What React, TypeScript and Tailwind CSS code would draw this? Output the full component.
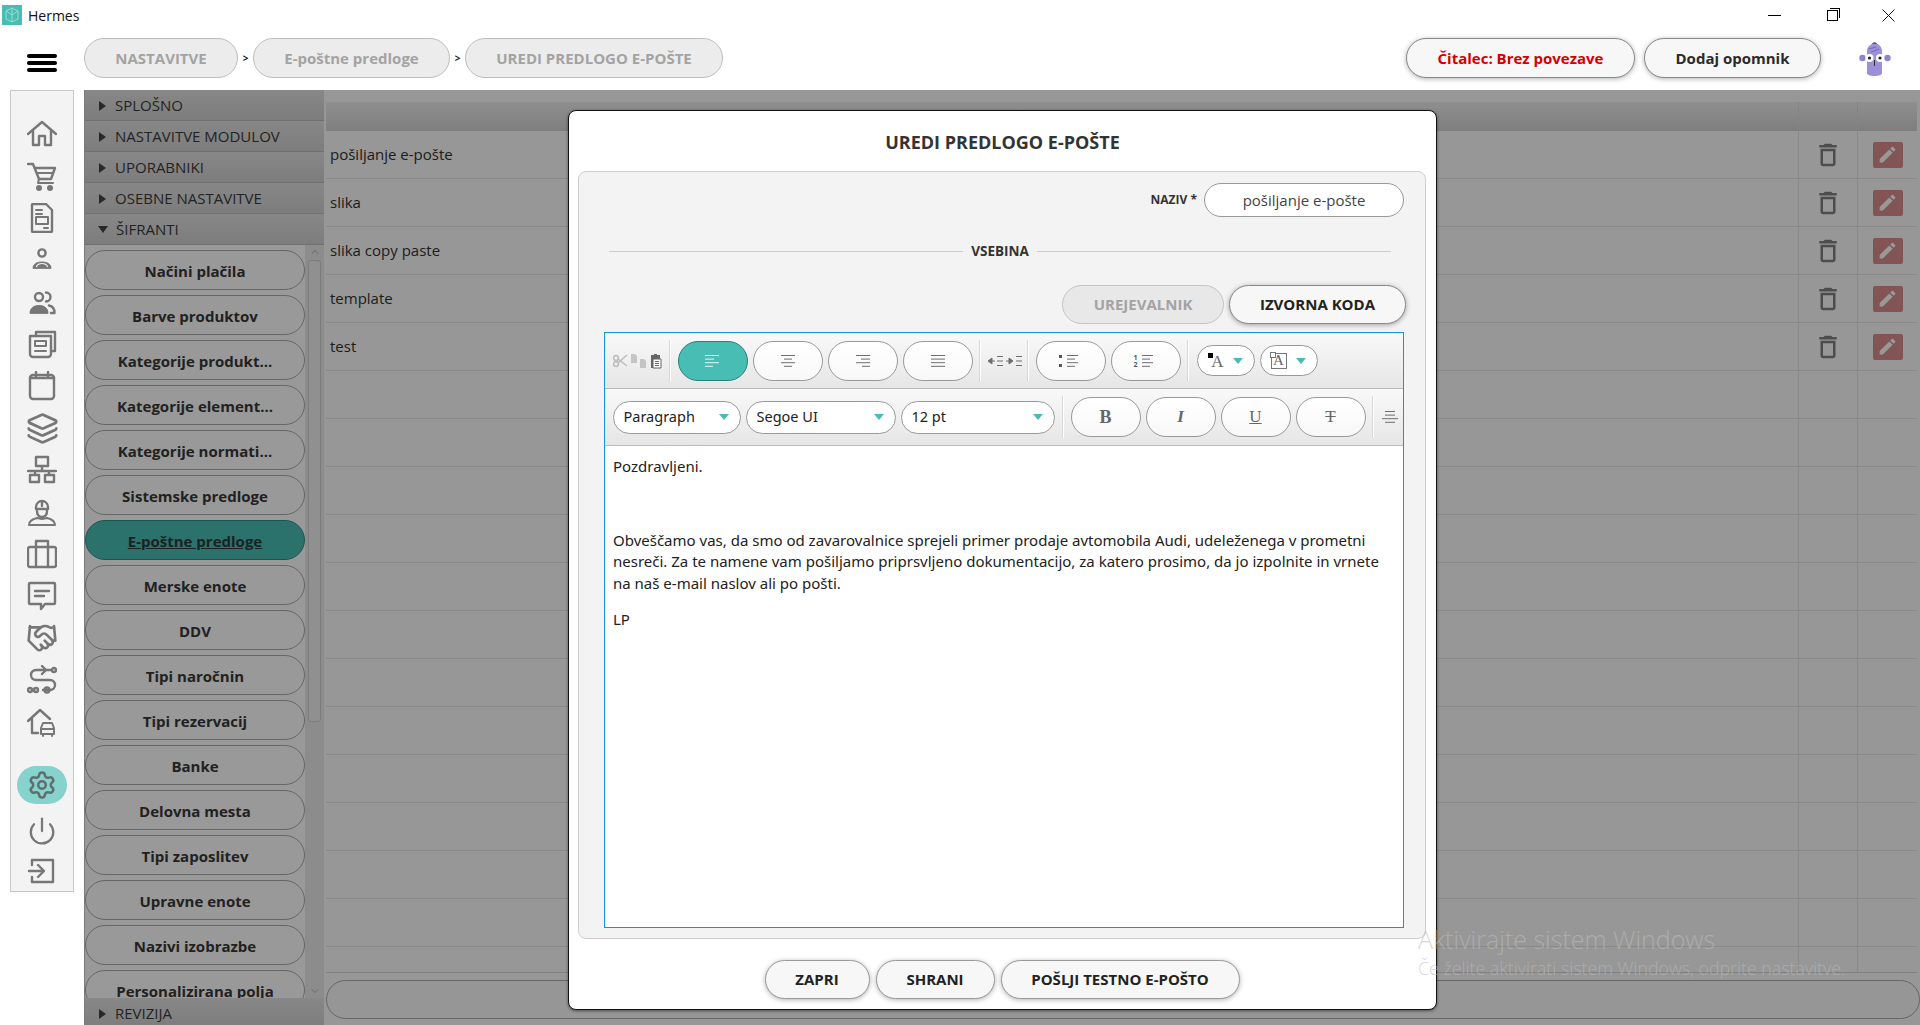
import {
  ChevronDown,
  ChevronUp,
  Handshake,
  Layers,
  Power,
  Settings,
} from 'lucide-react'
import { MdEdit, MdOutlineDelete } from 'react-icons/md'
import type { ReactNode } from 'react'

const font = { fontFamily: '"Open Sans", "Noto Sans", sans-serif' }

const accordionTop = ['SPLOŠNO', 'NASTAVITVE MODULOV', 'UPORABNIKI', 'OSEBNE NASTAVITVE']

const codebooks = [
  'Načini plačila',
  'Barve produktov',
  'Kategorije produkt...',
  'Kategorije element...',
  'Kategorije normati...',
  'Sistemske predloge',
  'E-poštne predloge',
  'Merske enote',
  'DDV',
  'Tipi naročnin',
  'Tipi rezervacij',
  'Banke',
  'Delovna mesta',
  'Tipi zaposlitev',
  'Upravne enote',
  'Nazivi izobrazbe',
  'Personalizirana polja',
]

const templates = ['pošiljanje e-pošte', 'slika', 'slika copy paste', 'template', 'test']

function Glyph({ children }: { children: ReactNode }) {
  return (
    <svg
      viewBox="0 0 30 30"
      className="w-[30px] h-[30px]"
      fill="none"
      stroke="currentColor"
      strokeWidth={2.4}
      strokeLinecap="round"
      strokeLinejoin="round"
    >
      {children}
    </svg>
  )
}

const nav: ReactNode[] = [
  <Glyph key="home">
    <path d="M1 15 15 3l14 12" />
    <path d="M6 12v14h6v-9h6v9h6V12" />
  </Glyph>,
  <Glyph key="cart">
    <path d="M1 3h5l6 15" />
    <path d="M8 7h20l-4 11H12" />
    <path d="M10 12h16M12 18l-1 4h15" strokeWidth={2} />
    <circle cx="12" cy="27" r="1.800" fill="currentColor" />
    <circle cx="23" cy="27" r="1.800" fill="currentColor" />
  </Glyph>,
  <Glyph key="doc">
    <path d="M6 1h13l6 6v21a1 1 0 0 1-1 1H6a1 1 0 0 1-1-1V2a1 1 0 0 1 1-1z" />
    <path d="M9 7h6M9 11h6M9 14h12v7H9zM17 25h4" strokeWidth={2} />
  </Glyph>,
  <Glyph key="user">
    <circle cx="15" cy="8" r="3.600" />
    <path d="M6 23c0-4 4-6 9-6s9 2 9 6z" fill="currentColor" strokeWidth={1} />
    <path d="M9.500 21.500c1-2 3-3 5.500-3s4.500 1 5.500 3" stroke="#f3f3f3" strokeWidth={1.2} />
  </Glyph>,
  <Glyph key="users">
    <circle cx="12" cy="10" r="4" />
    <path d="M19 5.500a4.500 4.500 0 0 1 0 9" />
    <path d="M3 26c0-5 4-7.500 9-7.500s9 2.500 9 7.500z" fill="currentColor" strokeWidth={1} />
    <path d="M22 18.500c3 .5 5.500 3 5.500 7.500H24" />
  </Glyph>,
  <Glyph key="stack">
    <path d="M9 7V3h19v19h-4" />
    <path d="M3 7h21v18a3 3 0 0 1-3 3H6a3 3 0 0 1-3-3z" />
    <path d="M8 12h11v5H8zM8 22h11" strokeWidth={2} />
  </Glyph>,
  <Glyph key="cal">
    <rect x="3" y="4" width="24" height="24" rx="3" />
    <path d="M9 1v4M21 1v4M3 7h24" />
  </Glyph>,
  <Layers key="layers" size={33} strokeWidth={2} />,
  <Glyph key="net">
    <rect x="9" y="2" width="12" height="9" fill="none" />
    <path d="M15 11v5M1 16h28M8 16v3M22 16v3" />
    <rect x="3" y="20" width="9" height="7" />
    <rect x="18" y="20" width="9" height="7" />
  </Glyph>,
  <Glyph key="worker">
    <path d="M9 12v-2a6 6 0 0 1 12 0v2zM15 4v5" />
    <path d="M10 14c0 4 2 6 5 6s5-2 5-6" />
    <path d="M2 28c0-4 4-6 8-7l5 1 5-1c4 1 8 3 8 7z" strokeWidth={2} />
  </Glyph>,
  <Glyph key="case">
    <rect x="1" y="8" width="28" height="20" rx="2" />
    <path d="M9 8V2h12v6M9 8v20M21 8v20" />
  </Glyph>,
  <Glyph key="chat">
    <path d="M3 2h24a1 1 0 0 1 1 1v19a1 1 0 0 1-1 1h-9l-4 5v-5H3a1 1 0 0 1-1-1V3a1 1 0 0 1 1-1z" />
    <path d="M8 10h14M8 15h9" />
  </Glyph>,
  <Handshake key="hands" size={32} strokeWidth={2} />,
  <Glyph key="route">
    <path d="M24 5H9a5 5 0 0 0 0 10h14a5 5 0 0 1 0 10h-7" />
    <path d="M15 1l4 4-4 4" />
    <circle cx="27" cy="5" r="2" />
    <circle cx="3" cy="25" r="2" />
    <circle cx="9" cy="25" r="2" />
    <circle cx="20" cy="25" r="2.500" />
  </Glyph>,
  <Glyph key="garage">
    <path d="M1 14 13 3l10 9M5 11v15h6" />
    <path d="M14 27v-6l2-5h9l2 5v6zM14 22h13M16 29v-2M25 29v-2" strokeWidth={2} />
  </Glyph>,
]

function Sidebar() {
  return (
    <aside className="ml-[10px] mb-[133px] w-[64px] shrink-0 bg-[#f3f3f3] border border-[#c8c8c8] flex flex-col items-center pt-[22px] text-[#777777]">
      <div className="flex flex-col items-center">
        {nav.map((icon, i) => (
          <div key={i} className="h-[42px] w-full flex items-center justify-center">
            {icon}
          </div>
        ))}
      </div>
      <div className="mt-[23px] w-[50px] h-[40px] rounded-[20px] bg-[#86d2cc] flex items-center justify-center text-[#5f6f6e]">
        <Settings size={30} strokeWidth={2} />
      </div>
      <div className="h-[42px] mt-[6px] flex items-center justify-center">
        <Power size={30} strokeWidth={1.800} />
      </div>
      <div className="h-[42px] flex items-center justify-center">
        <Glyph>
          <path d="M5 9V4h21v22H5v-5" />
          <path d="M2 15h14M11 9l6 6-6 6" />
        </Glyph>
      </div>
    </aside>
  )
}

function Crumb({ label, w }: { label: string; w: string }) {
  return (
    <div
      className={`${w} h-[40px] rounded-[20px] bg-[#ececec] border border-[#bdbdbd] flex items-center justify-center text-[15px] font-bold text-[#a3a3a3]`}
    >
      {label}
    </div>
  )
}

function Sep() {
  return <span className="w-[15px] text-center text-[10px] font-bold text-[#222222]">&gt;</span>
}

function AccordionHeader({ label, open }: { label: string; open?: boolean }) {
  return (
    <div className="h-[31px] shrink-0 flex items-center pl-[13px] pt-[1px] gap-[8px] bg-gradient-to-b from-[#e2e2e2] to-[#d0d0d0] border-b border-[#bbbbbb] text-[15px] text-[#3a3a3a]">
      <span
        className={
          open
            ? 'w-0 h-0 border-x-[5px] border-x-transparent border-t-[7px] border-t-[#444444]'
            : 'ml-[1px] w-0 h-0 border-y-[5px] border-y-transparent border-l-[7px] border-l-[#444444] mr-[1px]'
        }
      />
      {label}
    </div>
  )
}

function SideMenu() {
  return (
    <div className="w-[240px] shrink-0 h-full flex flex-col border-l border-[#cccccc] bg-white overflow-hidden">
      {accordionTop.map(label => (
        <AccordionHeader key={label} label={label} />
      ))}
      <AccordionHeader label="ŠIFRANTI" open />
      <div className="h-[753px] shrink-0 flex overflow-hidden">
        <div className="flex-1 min-w-0 flex flex-col gap-[5px] pt-[5px] overflow-hidden">
          {codebooks.map(label => {
            const active = label === 'E-poštne predloge'
            return (
              <div
                key={label}
                className={
                  active
                    ? 'h-[40px] shrink-0 pt-[2px] rounded-[20px] border border-[#2f8f87] bg-[#48bdb4] flex items-center justify-center text-[15px] font-bold text-[#2f3a3a] underline'
                    : 'h-[40px] shrink-0 pt-[2px] rounded-[20px] border border-[#aaaaaa] bg-white flex items-center justify-center text-[15px] font-bold text-[#383838]'
                }
              >
                {label}
              </div>
            )
          })}
        </div>
        <div className="w-[19px] shrink-0 bg-[#e9e9e9] flex flex-col items-center pt-[1px] text-[#b0b0b0]">
          <ChevronUp size={12} />
          <div className="mt-[2px] w-[13px] h-[462px] rounded-[3px] bg-[#f0f0f0] border border-[#cfcfcf]" />
          <ChevronDown size={12} className="mt-auto mb-[1px]" />
        </div>
      </div>
      <AccordionHeader label="REVIZIJA" />
    </div>
  )
}

function TemplateTable() {
  const rows = Array.from({ length: 18 }, (_, i) => templates[i] ?? '')
  return (
    <div className="flex-1 min-w-0 h-full flex flex-col bg-[#fcfcfc] pt-[12px] pl-[2px]">
      <div className="h-[871px] overflow-hidden border-b border-[#d8d8d8] mr-[3px]">
        <div className="h-[29px] flex bg-gradient-to-b from-[#eeeeee] to-[#d4d4d4] border-b border-[#d0d0d0]">
          <div className="flex-1" />
          <div className="w-[59px] border-l border-[#dcdcdc]" />
          <div className="w-[60px] border-l border-[#dcdcdc]" />
        </div>
        {rows.map((name, i) => (
          <div key={i} className="h-[48px] flex items-center border-b border-[#e4e4e4]">
            <div className="flex-1 pl-[4px] text-[15px] text-[#333333]">{name}</div>
            <div className="w-[59px] h-full border-l border-[#e4e4e4] flex items-center justify-center text-[#808080]">
              {name && <MdOutlineDelete size={30} />}
            </div>
            <div className="w-[60px] h-full border-l border-[#e4e4e4] flex items-center justify-center">
              {name && (
                <span className="w-[30px] h-[26px] rounded-[2px] bg-[#d98c8c] flex items-center justify-center text-white">
                  <MdEdit size={21} />
                </span>
              )}
            </div>
          </div>
        ))}
      </div>
      <div className="mt-[7px] h-[39px] rounded-[20px] border border-[#aaaaaa] bg-[#fafafa]" />
    </div>
  )
}

function Lines({ rows, stroke = '#6e6e6e' }: { rows: [number, number][]; stroke?: string }) {
  return (
    <svg viewBox="0 0 16 12" className="w-[16px] h-[12px]" stroke={stroke} strokeWidth={1}>
      {rows.map(([x1, x2], i) => (
        <line key={i} x1={x1} x2={x2} y1={0.5 + i * 3.600} y2={0.5 + i * 3.600} />
      ))}
    </svg>
  )
}

function ToolButton({ children, active }: { children: ReactNode; active?: boolean }) {
  return (
    <div
      className={
        active
          ? 'w-[70px] h-[40px] rounded-[20px] border border-[#2f7f78] bg-[#48bdb4] flex items-center justify-center'
          : 'w-[70px] h-[40px] rounded-[20px] border border-[#999999] bg-gradient-to-b from-white to-[#f8f8f8] flex items-center justify-center'
      }
    >
      {children}
    </div>
  )
}

function ToolSep({ mx }: { mx: string }) {
  return <div className={`${mx} w-[2px] h-[42px] shrink-0 bg-[#d8d8d8] border-r border-white`} />
}

function Caret() {
  return <span className="w-0 h-0 border-x-[5px] border-x-transparent border-t-[6px] border-t-[#48bdb4]" />
}

function Select({ label, w }: { label: string; w: string }) {
  return (
    <div
      className={`${w} h-[33px] rounded-[17px] border border-[#999999] bg-white flex items-center justify-between pl-[10px] pr-[11px] text-[14.500px] text-[#222222]`}
    >
      <span style={{ fontFamily: '"Noto Sans", sans-serif' }}>{label}</span>
      <Caret />
    </div>
  )
}

function ClipboardIcons() {
  return (
    <svg viewBox="0 0 50 16" className="w-[50px] h-[16px] shrink-0">
      <g stroke="#bcbcbc" fill="none" strokeWidth={1.500}>
        <circle cx="3" cy="5" r="2.400" />
        <circle cx="3" cy="11" r="2.400" />
        <path d="M5 6 14 13M5 10l9-8" />
      </g>
      <path d="M18 1h4l2 2v7h-6zM27 6h4l2 2v7h-6z" fill="#c4c4c4" />
      <path d="M38 2h3v-1h3v1h3v13h-9z" fill="#666666" />
      <path d="M40 6h8v9h-8z" fill="#ffffff" stroke="#666666" />
      <path d="M42 8.500h4M42 10.500h4M42 12.500h4" stroke="#666666" />
    </svg>
  )
}

function Indents() {
  return (
    <svg viewBox="0 0 34 10" className="w-[34px] h-[10px] shrink-0" stroke="#6e6e6e" fill="#6e6e6e">
      <path d="M0 5 4 2v6zM4 5h3" />
      <path d="M9 .5h6M9 5h6M9 9.500h6M25 5l-4-3v6zM18 5h3M28 .5h6M28 5h6M28 9.500h6" />
    </svg>
  )
}

function ListIcon({ numbered }: { numbered?: boolean }) {
  return (
    <div className="flex items-center gap-[4px] h-[14px]">
      <div className="flex flex-col justify-between h-full items-center w-[5px]">
        {numbered ? (
          <>
            <span className="text-[7px] leading-[7px] font-bold text-[#555555]">1</span>
            <span className="text-[7px] leading-[7px] font-bold text-[#555555]">2</span>
          </>
        ) : (
          <>
            <span className="mt-[1px] w-[3px] h-[3px] bg-[#555555]" />
            <span className="mb-[1px] w-[3px] h-[3px] bg-[#555555]" />
          </>
        )}
      </div>
      <Lines rows={[[0, 11], [0, 8], [0, 11], [0, 8]]} />
    </div>
  )
}

function ColorPill({ children }: { children: ReactNode }) {
  return (
    <div className="w-[58px] h-[31px] rounded-[16px] border border-[#999999] bg-white flex items-center pl-[10px] gap-[9px]">
      <span className="relative w-[16px] h-[16px] flex items-center justify-center">{children}</span>
      <Caret />
    </div>
  )
}

function Editor() {
  return (
    <div className="ml-[25px] mr-[21px] mt-[8px] flex-1 min-h-0 flex flex-col border-[1.500px] border-[#0f9bd0] bg-white">
      <div className="h-[56px] shrink-0 flex items-center pl-[7.500px] bg-gradient-to-b from-[#f9f9f9] to-[#e6e6e6] border-b border-[#bbbbbb]">
        <ClipboardIcons />
        <ToolSep mx="ml-[6px] mr-[7px]" />
        <div className="flex gap-[5px]">
          <ToolButton active>
            <Lines stroke="#e8f7f5" rows={[[0, 14], [0, 9], [0, 14], [0, 8]]} />
          </ToolButton>
          <ToolButton>
            <Lines rows={[[1, 15], [4, 12], [1, 15], [4, 12]]} />
          </ToolButton>
          <ToolButton>
            <Lines rows={[[1, 15], [6, 15], [1, 15], [7, 15]]} />
          </ToolButton>
          <ToolButton>
            <Lines rows={[[1, 15], [1, 15], [1, 15], [1, 15]]} />
          </ToolButton>
        </div>
        <ToolSep mx="ml-[6px] mr-[7px]" />
        <Indents />
        <ToolSep mx="ml-[5px] mr-[7px]" />
        <div className="flex gap-[5px]">
          <ToolButton>
            <ListIcon />
          </ToolButton>
          <ToolButton>
            <ListIcon numbered />
          </ToolButton>
        </div>
        <ToolSep mx="ml-[6px] mr-[8px]" />
        <div className="flex gap-[5px]">
          <ColorPill>
            <span className="absolute left-0 top-0 w-[5px] h-[5px] bg-black" />
            <span
              className="text-[17px] leading-none text-[#666666] translate-x-[2px] translate-y-[1px]"
              style={{ fontFamily: '"Liberation Serif", serif' }}
            >
              A
            </span>
          </ColorPill>
          <ColorPill>
            <span className="absolute inset-0 border border-[#777777]" />
            <span className="absolute -left-[1px] -top-[1px] w-[6px] h-[6px] bg-white border border-[#777777]" />
            <span
              className="text-[15px] leading-none text-[#666666]"
              style={{ fontFamily: '"Liberation Serif", serif' }}
            >
              A
            </span>
          </ColorPill>
        </div>
      </div>
      <div className="h-[57px] shrink-0 flex items-center pl-[7.500px] bg-gradient-to-b from-[#f9f9f9] to-[#e6e6e6] border-b border-[#bbbbbb]">
        <div className="flex gap-[5px]">
          <Select label="Paragraph" w="w-[128px]" />
          <Select label="Segoe UI" w="w-[150px]" />
          <Select label="12 pt" w="w-[154px]" />
        </div>
        <ToolSep mx="ml-[7px] mr-[7px]" />
        <div
          className="flex gap-[5px] text-[17px] text-[#666666]"
          style={{ fontFamily: '"Liberation Serif", serif' }}
        >
          <ToolButton>
            <b className="text-[18px]">B</b>
          </ToolButton>
          <ToolButton>
            <i className="font-bold">I</i>
          </ToolButton>
          <ToolButton>
            <span className="underline">U</span>
          </ToolButton>
          <ToolButton>
            <span className="line-through">T</span>
          </ToolButton>
        </div>
        <ToolSep mx="ml-[6px] mr-[8px]" />
        <Lines rows={[[3, 13], [3, 13], [0, 16], [3, 13]]} />
      </div>
      <div
        className="flex-1 min-h-0 overflow-hidden bg-white pt-[10px] px-[8px] text-[15px] leading-[21.600px] text-[#222222]"
        style={{ fontFamily: '"Noto Sans", sans-serif' }}
      >
        <p>Pozdravljeni.</p>
        <p className="mt-[52px]">
          Obveščamo vas, da smo od zavarovalnice sprejeli primer prodaje avtomobila Audi, udeleženega v prometni
          nesreči. Za te namene vam pošiljamo priprsvljeno dokumentacijo, za katero prosimo, da jo izpolnite in vrnete
          na naš e-mail naslov ali po pošti.
        </p>
        <p className="mt-[15px]">LP</p>
      </div>
    </div>
  )
}

function FooterButton({ label, w }: { label: string; w: string }) {
  return (
    <div
      className={`${w} h-[39px] rounded-[20px] border border-[#999999] bg-[#f7f7f7] shadow-[0_1px_5px_rgba(0,0,0,0.3)] flex items-center justify-center text-[15px] font-bold text-[#222222]`}
    >
      {label}
    </div>
  )
}

function EditDialog() {
  return (
    <div className="mt-[20px] ml-[1px] w-[869px] h-[900px] rounded-[8px] border border-[#111111] bg-white flex flex-col shadow-[0_1px_3px_rgba(0,0,0,0.5)]">
      <h2 className="h-[60px] shrink-0 flex items-center justify-center text-[18px] font-bold text-[#333333] pt-[2px]">
        UREDI PREDLOGO E-POŠTE
      </h2>
      <div className="ml-[9px] mr-[10px] flex-1 min-h-0 rounded-[8px] border border-[#cfcfcf] bg-[#f3f3f3] flex flex-col pt-[11px] pb-[10px]">
        <div className="flex justify-end items-center gap-[7px] pr-[21px]">
          <span className="text-[12px] font-bold text-[#333333]">NAZIV *</span>
          <div className="w-[200px] h-[34px] rounded-[17px] border border-[#999999] bg-white flex items-center justify-center text-[15px] text-[#444444]">
            pošiljanje e-pošte
          </div>
        </div>
        <div className="mt-[23px] ml-[30px] mr-[34px] h-[22px] flex items-center gap-[8px] text-[13.500px] font-bold text-[#333333]">
          <span className="flex-1 h-px bg-[#cccccc]" />
          VSEBINA
          <span className="flex-1 h-px bg-[#cccccc]" />
        </div>
        <div className="mt-[23px] flex justify-end gap-[5px] pr-[19px] text-[15px] font-bold">
          <div className="w-[162px] h-[39px] rounded-[20px] border border-[#c4c4c4] bg-[#e8e8e8] flex items-center justify-center text-[#a3a3a3]">
            UREJEVALNIK
          </div>
          <div className="w-[177px] h-[39px] rounded-[20px] border border-[#888888] bg-[#f7f7f7] shadow-[0_1px_5px_rgba(0,0,0,0.35)] flex items-center justify-center text-[#222222]">
            IZVORNA KODA
          </div>
        </div>
        <Editor />
      </div>
      <div className="h-[70px] shrink-0 flex justify-center gap-[6px] pt-[21px] pr-[1px]">
        <FooterButton label="ZAPRI" w="w-[105px]" />
        <FooterButton label="SHRANI" w="w-[119px]" />
        <FooterButton label="POŠLJI TESTNO E-POŠTO" w="w-[239px]" />
      </div>
    </div>
  )
}

function Mascot() {
  return (
    <svg viewBox="0 0 32 36" className="w-[32px] h-[36px]">
      <circle cx="3.500" cy="18" r="3.200" fill="#8f84cc" />
      <circle cx="28.500" cy="18" r="3.200" fill="#8f84cc" />
      <path d="M8 11c0-4 3-7 8-8 4 1 7 4 7 8v22c0 2-3 3-7.500 3S8 35 8 33z" fill="#9d90d8" />
      <path d="M13 4c1-2.500 4-2.500 5 0z" fill="#5b4fa0" />
      <path d="M10 9l7-2M12 12l8-3" stroke="#7467b8" strokeWidth={1} fill="none" />
      <circle cx="10.500" cy="18" r="4" fill="#ffffff" />
      <circle cx="21" cy="18" r="4" fill="#ffffff" />
      <circle cx="10.500" cy="18" r="1.600" fill="#222222" />
      <circle cx="21" cy="18" r="1.600" fill="#222222" />
      <path d="M15.500 20v6" stroke="#333333" />
    </svg>
  )
}

export default function App() {
  return (
    <div className="relative w-[1920px] h-[1025px] bg-white flex flex-col overflow-hidden" style={font}>
      <div className="h-[30px] shrink-0 flex items-center pl-[2px] text-[14px] text-[#111111]">
        <svg viewBox="0 0 20 20" className="w-[20px] h-[20px] mr-[6px]">
          <rect width="20" height="20" fill="#48bdb4" />
          <path d="M10 3 16 6v8l-6 3-6-3V6zM10 3v14M4 6l6 4 6-4" fill="none" stroke="#a9e2dc" strokeWidth={0.800} />
        </svg>
        Hermes
        <div className="ml-auto flex items-center text-[#222222]">
          <div className="w-[58px] flex justify-center">
            <span className="w-[13px] h-px bg-black" />
          </div>
          <div className="w-[59px] flex justify-center">
            <span className="relative w-[11px] h-[11px] border border-black bg-white before:absolute before:-top-[3px] before:-right-[3px] before:w-[10px] before:h-[10px] before:border-t before:border-r before:border-black" />
          </div>
          <svg viewBox="0 0 13 13" className="w-[13px] h-[13px] mr-[25px] ml-[20px]" stroke="#111111">
            <path d="M.5.5l12 12M12.500.5l-12 12" />
          </svg>
        </div>
      </div>
      <div className="h-[60px] shrink-0 flex items-start pt-[8px]">
        <div className="w-[84px] shrink-0 flex flex-col items-center gap-[3px] pt-[16px]">
          <span className="w-[30px] h-[4px] rounded-full bg-black" />
          <span className="w-[30px] h-[4px] rounded-full bg-black" />
          <span className="w-[30px] h-[4px] rounded-full bg-black" />
        </div>
        <div className="flex items-center">
          <Crumb label="NASTAVITVE" w="w-[154px]" />
          <Sep />
          <Crumb label="E-poštne predloge" w="w-[197px]" />
          <Sep />
          <Crumb label="UREDI PREDLOGO E-POŠTE" w="w-[258px]" />
        </div>
        <div className="ml-auto flex items-center gap-[9px] pr-[29px] text-[15px] font-bold">
          <div className="w-[229px] h-[40px] rounded-[20px] border border-[#888888] bg-[#f7f7f7] shadow-[0_1px_5px_rgba(0,0,0,0.3)] flex items-center justify-center text-[#d40000]">
            Čitalec: Brez povezave
          </div>
          <div className="w-[177px] h-[40px] rounded-[20px] border border-[#888888] bg-[#f7f7f7] shadow-[0_1px_5px_rgba(0,0,0,0.3)] flex items-center justify-center text-[#2b2b2b]">
            Dodaj opomnik
          </div>
          <div className="ml-[29px]">
            <Mascot />
          </div>
        </div>
      </div>
      <div className="flex-1 min-h-0 flex">
        <Sidebar />
        <main className="ml-[10px] flex-1 min-w-0 relative flex">
          <SideMenu />
          <TemplateTable />
          <div className="absolute inset-0 bg-black/40 flex justify-center items-start">
            <EditDialog />
          </div>
        </main>
      </div>
      <div className="absolute left-[1418px] top-[922px] text-[#bcbcbc]/60 pointer-events-none">
        <div className="text-[25px] font-light leading-[34px]">Aktivirajte sistem Windows</div>
        <div className="text-[17.800px] font-light leading-[24px] whitespace-nowrap">
          Če želite aktivirati sistem Windows, odprite nastavitve.
        </div>
      </div>
    </div>
  )
}
